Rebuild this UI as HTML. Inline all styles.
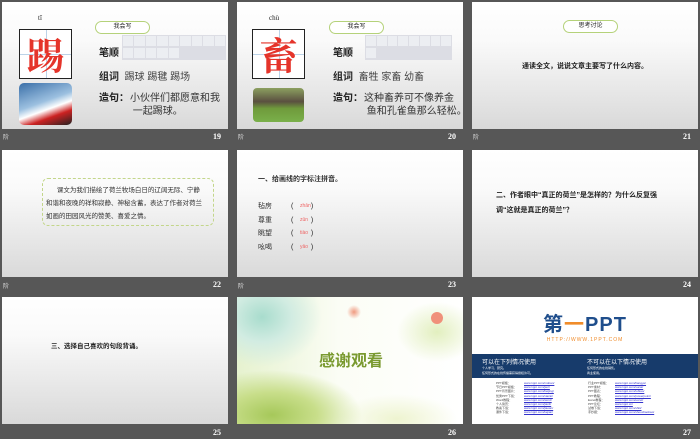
<!DOCTYPE html>
<html><head><meta charset="utf-8"><style>
*{margin:0;padding:0;box-sizing:border-box}
body{width:700px;height:439px;background:#575757;position:relative;overflow:hidden;font-family:"Liberation Sans","Noto Sans CJK SC",sans-serif;color:#222}
.s{position:absolute;width:226px;height:127px;background:linear-gradient(#fff,#fafafa 30%,#d9d9d9);overflow:hidden}
.a{position:absolute;white-space:nowrap}
.n{position:absolute;color:#fff;font:bold 8px "Liberation Serif",serif}
.l{position:absolute;color:#ddd;font-size:6px}
.pill{position:absolute;border:1.5px solid #b5d27a;border-radius:8px;background:#fff;font-size:6px;text-align:center;line-height:10px;height:13px}
.box{position:absolute;border:1.5px solid #222;background:#fff}
.box:before{content:"";position:absolute;left:50%;top:0;bottom:0;border-left:1px solid #bcd3e8}
.box:after{content:"";position:absolute;top:50%;left:0;right:0;border-top:1px solid #bcd3e8}
.box span{position:absolute;left:0;right:0;top:4px;text-align:center;color:#e5342a;font-size:38px;line-height:40px;z-index:1;font-family:"Noto Serif CJK SC",serif;font-weight:bold}
.grid{position:absolute;background:#dcdde4;display:grid;grid-template-columns:repeat(9,1fr);gap:1px;padding:1px}
.grid i{background:#eceef2;height:10px}
.b{font-weight:bold}
.lk{color:#33c;text-decoration:underline}
</style></head><body>

<!-- 19 -->
<div class="s" style="left:2px;top:2px">
<div class="a" style="left:36px;top:12px;font-size:7px;font-family:'Liberation Serif',serif">tī</div>
<div class="box" style="left:17px;top:27px;width:53px;height:50px"><span>踢</span></div>
<div class="a" style="left:17px;top:81px;width:53px;height:42px;border-radius:5px;background:linear-gradient(160deg,#3a6fa8,#9cc0e0 45%,#fff 60%,#c22 75%,#222)"></div>
<div class="pill" style="left:93px;top:19px;width:55px">我会写</div>
<div class="a b" style="left:97px;top:42px;font-size:10px">笔顺</div>
<div class="grid" style="left:120px;top:33px;width:104px;grid-template-rows:11px 11px"><i></i><i></i><i></i><i></i><i></i><i></i><i></i><i></i><i></i><i></i><i></i><i></i><i></i><i></i></div>
<div class="a" style="left:97px;top:66px;font-size:10px"><b>组词</b>&nbsp; <span style="color:#444">踢球 踢毽 踢场</span></div>
<div class="a b" style="left:97px;top:90px;font-size:10px;line-height:13px">造句：</div>
<div class="a" style="left:128px;top:90px;font-size:10px;line-height:13px;color:#333">小伙伴们都愿意和我<br>&nbsp;一起踢球。</div>
</div>
<div class="l" style="left:3px;top:132px">阶</div><div class="n" style="left:213px;top:132px">19</div>

<!-- 20 -->
<div class="s" style="left:237px;top:2px">
<div class="a" style="left:32px;top:12px;font-size:7px;font-family:'Liberation Serif',serif">chù</div>
<div class="box" style="left:15px;top:27px;width:53px;height:50px"><span>畜</span></div>
<div class="a" style="left:16px;top:86px;width:51px;height:34px;border-radius:4px;background:linear-gradient(#8ca060,#5a5040 40%,#6f9a3c 60%,#7ab04a)"></div>
<div class="pill" style="left:92px;top:19px;width:55px">我会写</div>
<div class="a b" style="left:96px;top:42px;font-size:10px">笔顺</div>
<div class="grid" style="left:128px;top:33px;width:87px;grid-template-columns:repeat(8,1fr);grid-template-rows:11px 11px"><i></i><i></i><i></i><i></i><i></i><i></i><i></i><i></i><i></i></div>
<div class="a" style="left:96px;top:66px;font-size:10px"><b>组词</b>&nbsp; <span style="color:#444">畜牲 家畜 幼畜</span></div>
<div class="a b" style="left:96px;top:90px;font-size:10px;line-height:13px">造句：</div>
<div class="a" style="left:127px;top:90px;font-size:10px;line-height:13px;color:#333">这种畜养可不像养金<br>&nbsp;鱼和孔雀鱼那么轻松。</div>
</div>
<div class="l" style="left:238px;top:132px">阶</div><div class="n" style="left:448px;top:132px">20</div>

<!-- 21 -->
<div class="s" style="left:472px;top:2px">
<div class="pill" style="left:91px;top:18px;width:55px">思考讨论</div>
<div class="a b" style="left:0;right:0;top:59px;text-align:center;font-size:7px">通读全文，说说文章主要写了什么内容。</div>
</div>
<div class="l" style="left:473px;top:132px">阶</div><div class="n" style="left:683px;top:132px">21</div>

<!-- 22 -->
<div class="s" style="left:2px;top:150px">
<div class="a" style="left:40px;top:28px;width:172px;height:48px;border:1px dashed #c3d68a;border-radius:6px"></div>
<div class="a" style="left:44px;top:34px;font-size:6.5px;line-height:13px;color:#333">&nbsp;&nbsp;&nbsp;&nbsp;&nbsp;&nbsp;课文为我们描绘了荷兰牧场白日的辽阔无际、宁静<br>和谐和夜晚的祥和寂静、神秘含蓄，表达了作者对荷兰<br>如画的田园风光的赞美、喜爱之情。</div>
</div>
<div class="l" style="left:3px;top:281px">阶</div><div class="n" style="left:213px;top:280px">22</div>

<!-- 23 -->
<div class="s" style="left:237px;top:150px">
<div class="a b" style="left:21px;top:24px;font-size:7px;color:#333">一、给画线的字标注拼音。</div>
<div class="a" style="left:21px;top:50px;font-size:7px;line-height:13.5px;color:#333">毡房<br>尊重<br>眺望<br>吆喝</div>
<div class="a" style="left:54px;top:50px;font-size:7px;line-height:13.5px">(&nbsp;&nbsp;&nbsp;&nbsp;&nbsp;&nbsp;&nbsp;&nbsp;&nbsp;)<br>(&nbsp;&nbsp;&nbsp;&nbsp;&nbsp;&nbsp;&nbsp;&nbsp;&nbsp;)<br>(&nbsp;&nbsp;&nbsp;&nbsp;&nbsp;&nbsp;&nbsp;&nbsp;&nbsp;)<br>(&nbsp;&nbsp;&nbsp;&nbsp;&nbsp;&nbsp;&nbsp;&nbsp;&nbsp;)</div>
<div class="a" style="left:63px;top:50px;font-size:5px;line-height:13.5px;color:#e66">zhān<br>zūn<br>tiào<br>yāo</div>
</div>
<div class="l" style="left:238px;top:281px">阶</div><div class="n" style="left:448px;top:280px">23</div>

<!-- 24 -->
<div class="s" style="left:472px;top:150px">
<div class="a b" style="left:24px;top:38px;font-size:7px;line-height:15px">二、作者眼中“真正的荷兰”是怎样的？为什么反复强<br>调“这就是真正的荷兰”？</div>
</div>
<div class="n" style="left:683px;top:280px">24</div>

<!-- 25 -->
<div class="s" style="left:2px;top:297px">
<div class="a b" style="left:49px;top:43px;font-size:6.5px">三、选择自己喜欢的句段背诵。</div>
</div>
<div class="n" style="left:213px;top:428px">25</div>

<!-- 26 -->
<div class="s" style="left:237px;top:297px;background:
radial-gradient(circle at 117px 15px,#f09a80 0,transparent 7px),
radial-gradient(ellipse 90px 45px at 35px 118px,#a6c85a 0,#c8de8a 50%,transparent 100%),
radial-gradient(ellipse 40px 30px at 200px 35px,#e2efbf 0,transparent 100%),
radial-gradient(ellipse 60px 50px at 25px 20px,#a8dccd 0,#d2ece2 50%,transparent 100%),
radial-gradient(ellipse 60px 25px at 160px 122px,#eef4d0 0,transparent 100%),
linear-gradient(90deg,#e6f2cf,#fbfdf5 45%,#fff)">
<div class="a" style="left:194px;top:15px;width:12px;height:12px;border-radius:50%;background:#f0907a"></div>
<div class="a" style="left:82px;top:50px;font-size:16px;font-weight:bold;color:#7a9a30">感谢观看</div>
</div>
<div class="n" style="left:448px;top:428px">26</div>

<!-- 27 -->
<div class="s" style="left:472px;top:297px;background:#fff">
<div class="a" style="left:0;right:0;top:18px;text-align:center;font-size:20px;line-height:20px;font-weight:bold;color:#1f4e8c;letter-spacing:1px">第<span style="color:#f08c2a">一</span>PPT</div>
<div class="a" style="left:0;right:0;top:40px;text-align:center;font-size:5px;line-height:6px;color:#f08c2a;letter-spacing:1px">HTTP://WWW.1PPT.COM</div>
<div class="a" style="left:0;top:57px;width:226px;height:24px;background:#173b6b;color:#fff">
<div class="a" style="left:10px;top:3px;font-size:6px">可以在下列情况使用</div>
<div class="a" style="left:115px;top:3px;font-size:6px">不可以在以下情况使用</div>
<div class="a" style="left:10px;top:12px;font-size:3px;line-height:5px">个人学习、研究。<br>任何形式的在线传播需获得授权许可。</div>
<div class="a" style="left:115px;top:12px;font-size:3px;line-height:5px">任何形式的在线销售。<br>商业使用。</div>
</div>
<div class="a" style="left:24px;top:84px;font-size:3px;line-height:4.2px;color:#444">PPT模板：<br>节日PPT模板：<br>PPT背景图片：<br>优秀PPT下载：<br>Word教程：<br>个人简历：<br>教案下载：<br>课件下载：</div>
<div class="a lk" style="left:52px;top:84px;font-size:3px;line-height:4.2px">www.1ppt.com/moban/<br>www.1ppt.com/jieri/<br>www.1ppt.com/beijing/<br>www.1ppt.com/xiazai/<br>www.1ppt.com/word/<br>www.1ppt.com/jianli/<br>www.1ppt.com/jiaoan/<br>www.1ppt.com/kejian/</div>
<div class="a" style="left:116px;top:84px;font-size:3px;line-height:4.2px;color:#444">行业PPT模板：<br>PPT素材：<br>PPT图表：<br>PPT教程：<br>Excel教程：<br>PPT论坛：<br>试卷下载：<br>手抄报：</div>
<div class="a lk" style="left:143px;top:84px;font-size:3px;line-height:4.2px">www.1ppt.com/hangye/<br>www.1ppt.com/sucai/<br>www.1ppt.com/tubiao/<br>www.1ppt.com/powerpoint/<br>www.1ppt.com/excel/<br>www.1ppt.cn/<br>www.1ppt.com/shiti/<br>www.1ppt.com/shouchaobao/</div>
</div>
<div class="n" style="left:683px;top:428px">27</div>

</body></html>
